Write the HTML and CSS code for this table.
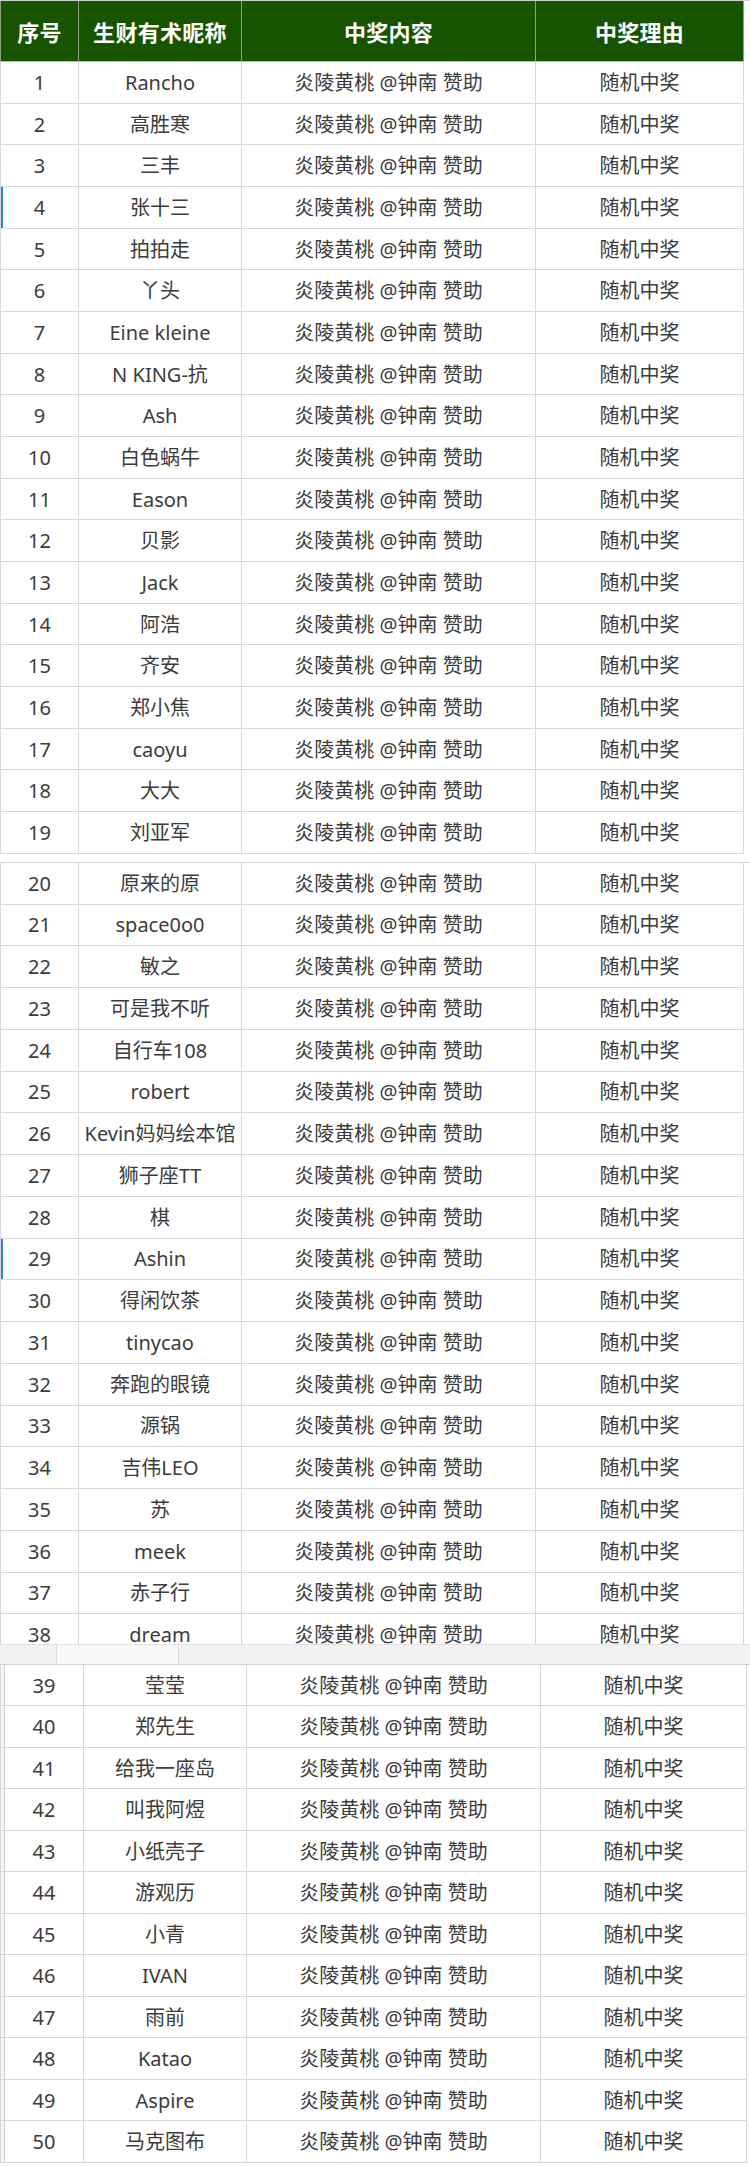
FILE: index.html
```html
<!DOCTYPE html>
<html lang="zh-CN">
<head>
<meta charset="utf-8">
<title>中奖名单</title>
<link rel="stylesheet" href="styles.css">
</head>
<body>
<div class="sheet">
  <section class="seg seg1">
    <div class="row head"><div class="c">序号</div><div class="c">生财有术昵称</div><div class="c">中奖内容</div><div class="c">中奖理由</div></div>
    <div class="row"><div class="c">1</div><div class="c">Rancho</div><div class="c">炎陵黄桃 @钟南 赞助</div><div class="c">随机中奖</div></div>
    <div class="row"><div class="c">2</div><div class="c">高胜寒</div><div class="c">炎陵黄桃 @钟南 赞助</div><div class="c">随机中奖</div></div>
    <div class="row"><div class="c">3</div><div class="c">三丰</div><div class="c">炎陵黄桃 @钟南 赞助</div><div class="c">随机中奖</div></div>
    <div class="row mark"><div class="c">4</div><div class="c">张十三</div><div class="c">炎陵黄桃 @钟南 赞助</div><div class="c">随机中奖</div></div>
    <div class="row"><div class="c">5</div><div class="c">拍拍走</div><div class="c">炎陵黄桃 @钟南 赞助</div><div class="c">随机中奖</div></div>
    <div class="row"><div class="c">6</div><div class="c">丫头</div><div class="c">炎陵黄桃 @钟南 赞助</div><div class="c">随机中奖</div></div>
    <div class="row"><div class="c">7</div><div class="c">Eine kleine</div><div class="c">炎陵黄桃 @钟南 赞助</div><div class="c">随机中奖</div></div>
    <div class="row"><div class="c">8</div><div class="c">N KING-抗</div><div class="c">炎陵黄桃 @钟南 赞助</div><div class="c">随机中奖</div></div>
    <div class="row"><div class="c">9</div><div class="c">Ash</div><div class="c">炎陵黄桃 @钟南 赞助</div><div class="c">随机中奖</div></div>
    <div class="row"><div class="c">10</div><div class="c">白色蜗牛</div><div class="c">炎陵黄桃 @钟南 赞助</div><div class="c">随机中奖</div></div>
    <div class="row"><div class="c">11</div><div class="c">Eason</div><div class="c">炎陵黄桃 @钟南 赞助</div><div class="c">随机中奖</div></div>
    <div class="row"><div class="c">12</div><div class="c">贝影</div><div class="c">炎陵黄桃 @钟南 赞助</div><div class="c">随机中奖</div></div>
    <div class="row"><div class="c">13</div><div class="c">Jack</div><div class="c">炎陵黄桃 @钟南 赞助</div><div class="c">随机中奖</div></div>
    <div class="row"><div class="c">14</div><div class="c">阿浩</div><div class="c">炎陵黄桃 @钟南 赞助</div><div class="c">随机中奖</div></div>
    <div class="row"><div class="c">15</div><div class="c">齐安</div><div class="c">炎陵黄桃 @钟南 赞助</div><div class="c">随机中奖</div></div>
    <div class="row"><div class="c">16</div><div class="c">郑小焦</div><div class="c">炎陵黄桃 @钟南 赞助</div><div class="c">随机中奖</div></div>
    <div class="row"><div class="c">17</div><div class="c">caoyu</div><div class="c">炎陵黄桃 @钟南 赞助</div><div class="c">随机中奖</div></div>
    <div class="row"><div class="c">18</div><div class="c">大大</div><div class="c">炎陵黄桃 @钟南 赞助</div><div class="c">随机中奖</div></div>
    <div class="row"><div class="c">19</div><div class="c">刘亚军</div><div class="c">炎陵黄桃 @钟南 赞助</div><div class="c">随机中奖</div></div>
  </section>
  <div class="gap"></div>
  <section class="seg seg2">
    <div class="row"><div class="c">20</div><div class="c">原来的原</div><div class="c">炎陵黄桃 @钟南 赞助</div><div class="c">随机中奖</div></div>
    <div class="row"><div class="c">21</div><div class="c">space0o0</div><div class="c">炎陵黄桃 @钟南 赞助</div><div class="c">随机中奖</div></div>
    <div class="row"><div class="c">22</div><div class="c">敏之</div><div class="c">炎陵黄桃 @钟南 赞助</div><div class="c">随机中奖</div></div>
    <div class="row"><div class="c">23</div><div class="c">可是我不听</div><div class="c">炎陵黄桃 @钟南 赞助</div><div class="c">随机中奖</div></div>
    <div class="row"><div class="c">24</div><div class="c">自行车108</div><div class="c">炎陵黄桃 @钟南 赞助</div><div class="c">随机中奖</div></div>
    <div class="row"><div class="c">25</div><div class="c">robert</div><div class="c">炎陵黄桃 @钟南 赞助</div><div class="c">随机中奖</div></div>
    <div class="row"><div class="c">26</div><div class="c">Kevin妈妈绘本馆</div><div class="c">炎陵黄桃 @钟南 赞助</div><div class="c">随机中奖</div></div>
    <div class="row"><div class="c">27</div><div class="c">狮子座TT</div><div class="c">炎陵黄桃 @钟南 赞助</div><div class="c">随机中奖</div></div>
    <div class="row"><div class="c">28</div><div class="c">棋</div><div class="c">炎陵黄桃 @钟南 赞助</div><div class="c">随机中奖</div></div>
    <div class="row mark"><div class="c">29</div><div class="c">Ashin</div><div class="c">炎陵黄桃 @钟南 赞助</div><div class="c">随机中奖</div></div>
    <div class="row"><div class="c">30</div><div class="c">得闲饮茶</div><div class="c">炎陵黄桃 @钟南 赞助</div><div class="c">随机中奖</div></div>
    <div class="row"><div class="c">31</div><div class="c">tinycao</div><div class="c">炎陵黄桃 @钟南 赞助</div><div class="c">随机中奖</div></div>
    <div class="row"><div class="c">32</div><div class="c">奔跑的眼镜</div><div class="c">炎陵黄桃 @钟南 赞助</div><div class="c">随机中奖</div></div>
    <div class="row"><div class="c">33</div><div class="c">源锅</div><div class="c">炎陵黄桃 @钟南 赞助</div><div class="c">随机中奖</div></div>
    <div class="row"><div class="c">34</div><div class="c">吉伟LEO</div><div class="c">炎陵黄桃 @钟南 赞助</div><div class="c">随机中奖</div></div>
    <div class="row"><div class="c">35</div><div class="c">苏</div><div class="c">炎陵黄桃 @钟南 赞助</div><div class="c">随机中奖</div></div>
    <div class="row"><div class="c">36</div><div class="c">meek</div><div class="c">炎陵黄桃 @钟南 赞助</div><div class="c">随机中奖</div></div>
    <div class="row"><div class="c">37</div><div class="c">赤子行</div><div class="c">炎陵黄桃 @钟南 赞助</div><div class="c">随机中奖</div></div>
    <div class="row"><div class="c">38</div><div class="c">dream</div><div class="c">炎陵黄桃 @钟南 赞助</div><div class="c">随机中奖</div></div>
  </section>
  <div class="band"><div class="b1"></div><div class="b2"></div><div class="b3"></div></div>
  <section class="seg seg3">
    <div class="row"><div class="c stub"></div><div class="c">39</div><div class="c">莹莹</div><div class="c">炎陵黄桃 @钟南 赞助</div><div class="c">随机中奖</div></div>
    <div class="row"><div class="c stub"></div><div class="c">40</div><div class="c">郑先生</div><div class="c">炎陵黄桃 @钟南 赞助</div><div class="c">随机中奖</div></div>
    <div class="row"><div class="c stub"></div><div class="c">41</div><div class="c">给我一座岛</div><div class="c">炎陵黄桃 @钟南 赞助</div><div class="c">随机中奖</div></div>
    <div class="row"><div class="c stub"></div><div class="c">42</div><div class="c">叫我阿煜</div><div class="c">炎陵黄桃 @钟南 赞助</div><div class="c">随机中奖</div></div>
    <div class="row"><div class="c stub"></div><div class="c">43</div><div class="c">小纸壳子</div><div class="c">炎陵黄桃 @钟南 赞助</div><div class="c">随机中奖</div></div>
    <div class="row"><div class="c stub"></div><div class="c">44</div><div class="c">游观历</div><div class="c">炎陵黄桃 @钟南 赞助</div><div class="c">随机中奖</div></div>
    <div class="row"><div class="c stub"></div><div class="c">45</div><div class="c">小青</div><div class="c">炎陵黄桃 @钟南 赞助</div><div class="c">随机中奖</div></div>
    <div class="row"><div class="c stub"></div><div class="c">46</div><div class="c">IVAN</div><div class="c">炎陵黄桃 @钟南 赞助</div><div class="c">随机中奖</div></div>
    <div class="row"><div class="c stub"></div><div class="c">47</div><div class="c">雨前</div><div class="c">炎陵黄桃 @钟南 赞助</div><div class="c">随机中奖</div></div>
    <div class="row"><div class="c stub"></div><div class="c">48</div><div class="c">Katao</div><div class="c">炎陵黄桃 @钟南 赞助</div><div class="c">随机中奖</div></div>
    <div class="row"><div class="c stub"></div><div class="c">49</div><div class="c">Aspire</div><div class="c">炎陵黄桃 @钟南 赞助</div><div class="c">随机中奖</div></div>
    <div class="row"><div class="c stub"></div><div class="c">50</div><div class="c">马克图布</div><div class="c">炎陵黄桃 @钟南 赞助</div><div class="c">随机中奖</div></div>
  </section>
</div>
</body>
</html>
```

FILE: styles.css
```css
* { box-sizing: border-box; }

html, body {
  margin: 0;
  padding: 0;
  background: #ffffff;
}

body {
  font-family: "Noto Sans", "Noto Sans CJK SC", sans-serif;
  font-size: 20px;
  color: #3c3c3c;
  width: 750px;
}

.sheet {
  display: flex;
  flex-direction: column;
  width: 750px;
}

.seg {
  display: flex;
  flex-direction: column;
  width: 750px;
}

.row {
  display: grid;
  grid-template-columns: 79px 163px 294px 208px;
  height: 41.68px;
}

.c {
  display: flex;
  align-items: center;
  justify-content: center;
  border-right: 1px solid #d8d8d8;
  border-bottom: 1px solid #d8d8d8;
  white-space: nowrap;
  line-height: 1;
  padding-top: 1px;
}

.c:first-child {
  border-left: 1px solid #d8d8d8;
}

.mark .c:first-child {
  box-shadow: inset 2px 0 0 #2f7fe6;
}

/* header */
.seg1 {
  border-top: 1px solid #d0d0d0;
}

.row.head {
  height: 61px;
}

.head .c {
  background: #165400;
  color: #ffffff;
  font-weight: bold;
  font-size: 22px;
  letter-spacing: 0.3px;
  border-right: 1px solid #8ea084;
  border-bottom: 1px solid #b8c4b0;
}

.head .c:first-child {
  border-left: 1px solid #8ea084;
}

.gap {
  height: 8px;
}

.seg2 {
  height: 782px;
  overflow: hidden;
  border-top: 1px solid #d8d8d8;
}

.seg2 .row {
  height: 41.75px;
  flex-shrink: 0;
}

.band {
  height: 21px;
  background: #f2f2f2;
  border-top: 1px solid #e2e2e2;
  border-bottom: 1px solid #d4d4d4;
  display: grid;
  grid-template-columns: 57px 122px 1fr;
}

.band .b1 {
  border-right: 1px solid #dcdcdc;
}

.band .b2 {
  background: #f8f8f8;
  border-right: 1px solid #dcdcdc;
}

.seg3 .row {
  grid-template-columns: 5px 79px 163px 294px 206px;
  height: 41.5px;
}

.seg3 .c.stub {
  border-left: 1px solid #d8d8d8;
  border-right: 1px solid #cfcfcf;
  background: #f7f7f7;
}
```
